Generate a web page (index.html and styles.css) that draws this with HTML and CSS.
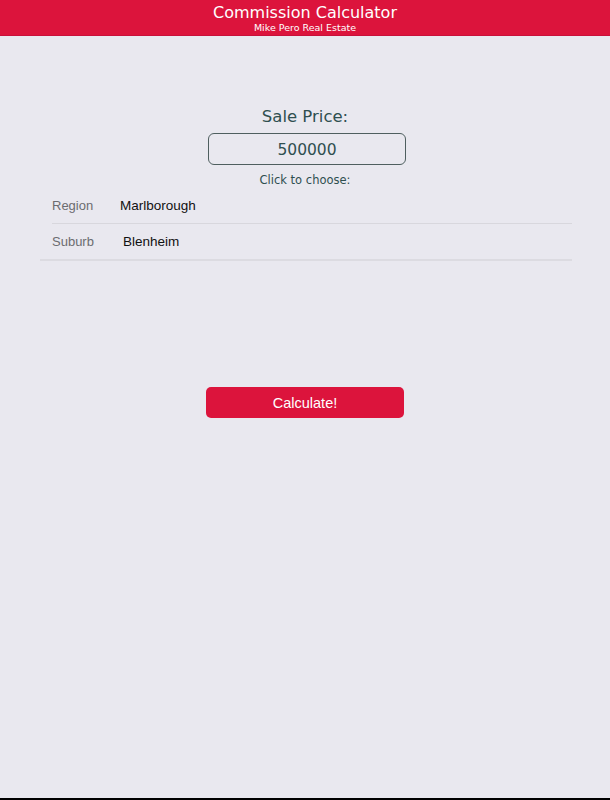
FILE: index.html
```html
<!DOCTYPE html>
<html lang="en">
<head>
    <meta charset="UTF-8">
    <meta name="viewport" content="width=device-width, initial-scale=1.0">
    <title>Commission Calculator</title>
    <link rel="stylesheet" href="styles.css">
</head>
<body>
    <header class="nav-bar">
        <div class="nav-title">Commission Calculator</div>
        <div class="nav-subtitle">Mike Pero Real Estate</div>
    </header>

    <main class="content">
        <div class="price-block">
            <label class="price-label" for="price">Sale Price:</label>
            <input class="price-input" id="price" type="text" value="500000">
            <div class="choose-hint">Click to choose:</div>
        </div>

        <div class="picker-list">
            <div class="picker-row">
                <span class="picker-label">Region</span>
                <span class="picker-value">Marlborough</span>
            </div>
            <div class="picker-row last">
                <span class="picker-label">Suburb</span>
                <span class="picker-value suburb">Blenheim</span>
            </div>
        </div>

        <div class="actions">
            <button class="calc-button">Calculate!</button>
        </div>
    </main>
</body>
</html>
```

FILE: styles.css
```css
html, body {
    height: 100%;
}

body {
    margin: 0;
    display: flex;
    flex-direction: column;
    background: #e9e8ef;
    border-bottom: 2px solid #000;
    box-sizing: border-box;
    font-family: 'DejaVu Sans', Verdana, sans-serif;
}

.nav-bar {
    height: 36px;
    box-sizing: border-box;
    background: #dc143c;
    border-bottom: 1px solid #c9103a;
    color: #fff;
    text-align: center;
    padding-top: 3px;
}

.nav-title {
    font-size: 16px;
    line-height: 19px;
}

.nav-subtitle {
    font-size: 9.5px;
    line-height: 11px;
}

.content {
    flex: 1;
}

.price-block {
    display: flex;
    flex-direction: column;
    align-items: center;
    padding-top: 70px;
    color: #2f4f4f;
}

.price-label {
    font-size: 16.5px;
    line-height: 22px;
}

.price-input {
    margin: 5px 0 0 4px;
    width: 198px;
    height: 32px;
    box-sizing: border-box;
    border: 1px solid #4f5f5f;
    border-radius: 6px;
    background: transparent;
    text-align: center;
    font-family: 'DejaVu Sans', Verdana, sans-serif;
    font-size: 15.5px;
    color: #2f4f4f;
    padding: 2px 0 0;
}

.choose-hint {
    margin-top: 8px;
    font-size: 11.5px;
    line-height: 14px;
}

.picker-list {
    margin: 0 38px 0 40px;
    border-bottom: 2px solid #dcdbe1;
    font-family: 'Liberation Sans', Arial, sans-serif;
}

.picker-row {
    display: flex;
    align-items: center;
    height: 36px;
    margin-left: 12px;
    border-bottom: 1px solid #d8d7dd;
}

.picker-row.last {
    height: 35px;
    border-bottom: none;
}

.picker-label {
    width: 68px;
    font-size: 13px;
    color: #6c6c70;
}

.picker-value {
    font-size: 13.5px;
    color: #111;
}

.picker-value.suburb {
    margin-left: 3px;
}

.actions {
    display: flex;
    justify-content: center;
    padding-top: 126px;
}

.calc-button {
    width: 198px;
    height: 31px;
    border: none;
    border-radius: 5px;
    background: #dc143c;
    color: #fff;
    font-family: 'Liberation Sans', Arial, sans-serif;
    font-size: 14.5px;
}
```
